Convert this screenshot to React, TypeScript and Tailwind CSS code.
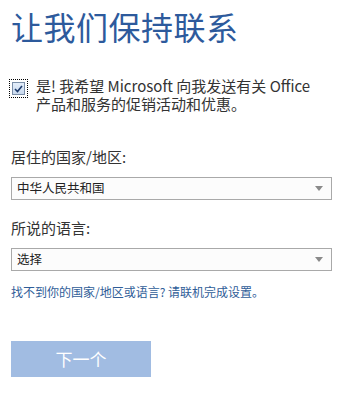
import { useState } from "react";

const font = { fontFamily: '"Noto Sans CJK SC", "Noto Sans", sans-serif' };

function SelectBox({ value }: { value: string }) {
  return (
    <div className="flex h-[23px] w-[321px] items-center justify-between border border-[#a9a9a9] bg-[#fcfcfc] pl-[5px] pr-[8px] text-[12.5px] text-[#222]">
      <span>{value}</span>
      <svg width="8" height="5" viewBox="0 0 8 5">
        <path d="M0 0h8L4 5z" fill="#8a8a8a" />
      </svg>
    </div>
  );
}

export default function App() {
  const [checked, setChecked] = useState(true);

  return (
    <div style={font} className="h-[395px] w-[345px] bg-white px-[11px] pt-[2px] text-[#333]">
      <h1 className="text-[32px] font-normal leading-[48px] tracking-[0.5px] text-[#2d5a9c]">
        让我们保持联系
      </h1>

      <div className="mt-[27px] flex gap-[10px]">
        <button
          onClick={() => setChecked(!checked)}
          className="mt-[4px] flex h-[15px] w-[15px] shrink-0 items-center justify-center outline-1 outline-dotted outline-offset-[1px] outline-black"
        >
          <span className="flex h-[13px] w-[13px] items-center justify-center border border-[#7a8ea8] bg-gradient-to-b from-[#e4eefa] to-[#c9d9ee]">
            {checked && (
              <svg width="9" height="8" viewBox="0 0 9 8">
                <path d="M1 4l2.5 2.5L8 1" fill="none" stroke="#1c3a6b" strokeWidth="1.6" />
              </svg>
            )}
          </span>
        </button>
        <p className="w-[290px] text-[15px] leading-[18px] text-[#333]">
          是! 我希望 Microsoft 向我发送有关 Office 产品和服务的促销活动和优惠。
        </p>
      </div>

      <div className="mt-[33px] text-[15px] leading-[22px]">居住的国家/地区:</div>
      <div className="mt-[9px]">
        <SelectBox value="中华人民共和国" />
      </div>

      <div className="mt-[17px] text-[15px] leading-[22px]">所说的语言:</div>
      <div className="mt-[9px]">
        <SelectBox value="选择" />
      </div>

      <a className="mt-[12px] block text-[12px] leading-[18px] text-[#2f5d98]">
        找不到你的国家/地区或语言? 请联机完成设置。
      </a>

      <button className="mt-[40px] flex h-[36px] w-[140px] items-center justify-center bg-[#a1bce2] text-[17px] text-white">
        下一个
      </button>
    </div>
  );
}
